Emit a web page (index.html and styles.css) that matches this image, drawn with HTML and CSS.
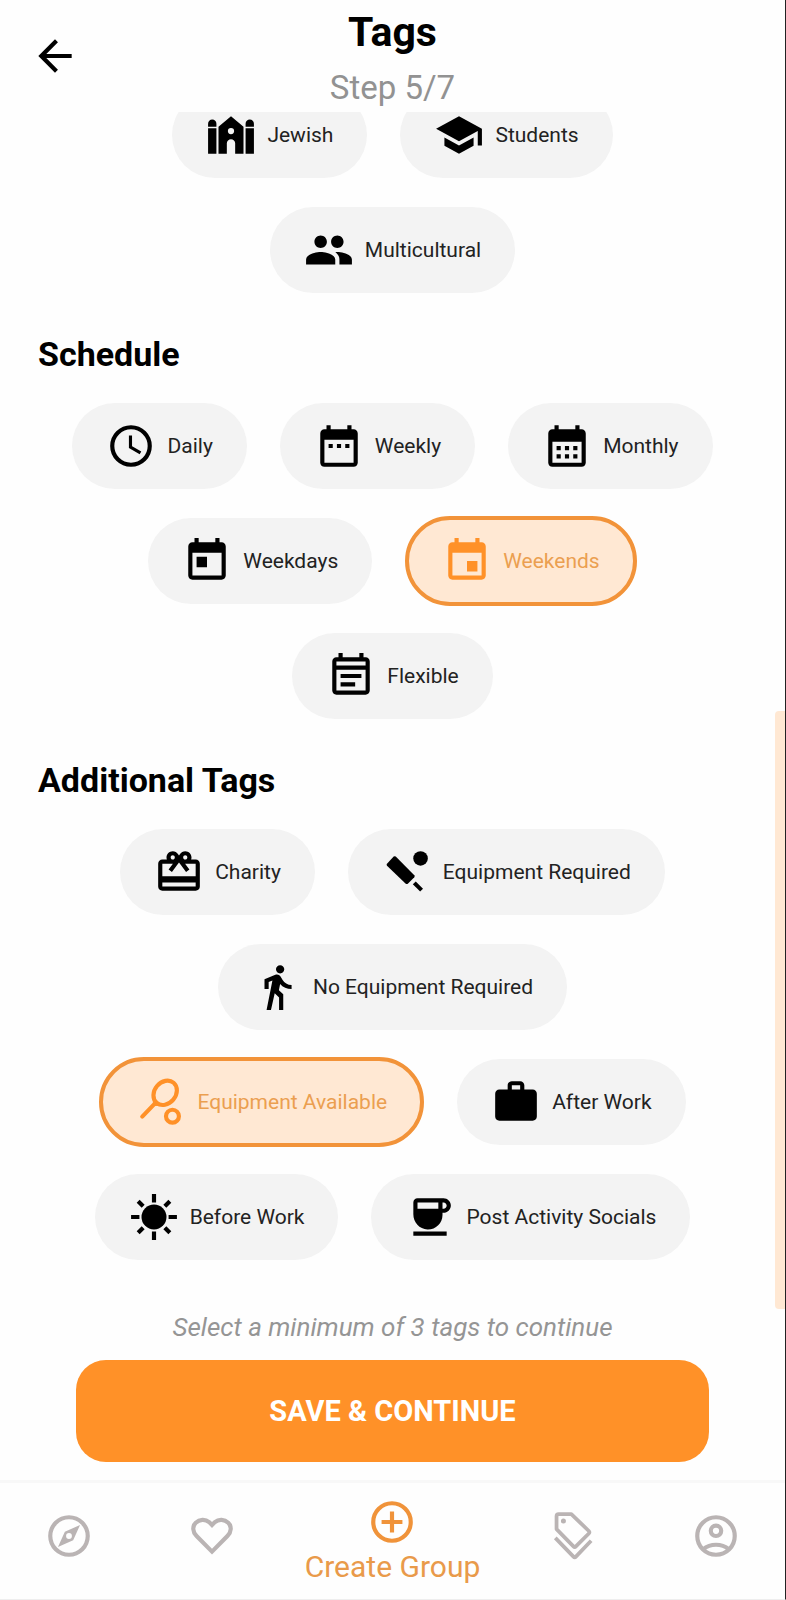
FILE: index.html
```html
<!DOCTYPE html>
<html lang="en">
<head>
<meta charset="utf-8">
<meta name="viewport" content="width=device-width, initial-scale=1">
<title>Tags</title>
<link rel="stylesheet" href="styles.css">
</head>
<body>
<div class="screen">
  <header class="header">
    <button class="back" type="button" aria-label="Back">
      <svg class="icon" viewBox="0 0 24 24"><path d="M20 11H7.830l5.590-5.590L12 4l-8 8 8 8 1.410-1.410L7.830 13H20v-2z"/></svg>
    </button>
    <div class="heading">
      <h1 class="title">Tags</h1>
      <p class="step">Step 5/7</p>
    </div>
  </header>

  <main class="content">
    <div class="chips chips-scrolled">
      <button class="chip" type="button">
        <svg class="icon" viewBox="0 0 24 24"><path d="M1 8V6.600a2 2 0 0 1 4 0V8zM1 8.700h4V21H1zM19 8V6.600a2 2 0 0 1 4 0V8zM19 8.700h4V21h-4z"/><path fill-rule="evenodd" d="M12 3l6 5v13h-4v-5a2 2 0 0 0-4 0v5H6V8zM12 8.600a1.500 1.500 0 1 0 0 3 1.500 1.500 0 0 0 0-3z"/></svg>
        Jewish
      </button>
      <button class="chip" type="button">
        <svg class="icon" viewBox="0 0 24 24"><path d="M5 13.180v4L12 21l7-3.820v-4L12 17l-7-3.820zM12 3L1 9l11 6 9-4.910V17h2V9L12 3z"/></svg>
        Students
      </button>
      <button class="chip" type="button">
        <svg class="icon" viewBox="0 0 24 24"><path d="M16 11c1.660 0 2.990-1.340 2.990-3S17.660 5 16 5c-1.660 0-3 1.340-3 3s1.340 3 3 3zm-8 0c1.660 0 2.990-1.340 2.990-3S9.660 5 8 5C6.340 5 5 6.340 5 8s1.340 3 3 3zm0 2c-2.330 0-7 1.170-7 3.500V19h14v-2.500c0-2.330-4.670-3.500-7-3.500zm8 0c-.29 0-.62.02-.97.05 1.160.84 1.970 1.970 1.970 3.450V19h6v-2.500c0-2.330-4.670-3.500-7-3.500z"/></svg>
        Multicultural
      </button>
    </div>

    <h2 class="section-title">Schedule</h2>
    <div class="chips">
      <button class="chip" type="button">
        <svg class="icon line" viewBox="0 0 24 24"><circle cx="12" cy="12" r="9"/><path stroke-width="1.500" d="M11.750 7v5.500l4.800 2.800"/></svg>
        Daily
      </button>
      <button class="chip" type="button">
        <svg class="icon" viewBox="0 0 24 24"><path d="M9 11H7v2h2v-2zm4 0h-2v2h2v-2zm4 0h-2v2h2v-2zm2-7h-1V2h-2v2H8V2H6v2H5c-1.110 0-1.990.9-1.990 2L3 20c0 1.100.89 2 2 2h14c1.100 0 2-.9 2-2V6c0-1.100-.9-2-2-2zm0 16H5V9h14v11z"/></svg>
        Weekly
      </button>
      <button class="chip" type="button">
        <svg class="icon" viewBox="0 0 24 24"><path d="M19 4h-1V2h-2v2H8V2H6v2H5c-1.110 0-1.990.9-1.990 2L3 20c0 1.100.89 2 2 2h14c1.100 0 2-.9 2-2V6c0-1.100-.9-2-2-2zm0 16H5V10h14v10zM9 14H7v-2h2v2zm4 0h-2v-2h2v2zm4 0h-2v-2h2v2zm-8 4H7v-2h2v2zm4 0h-2v-2h2v2zm4 0h-2v-2h2v2z"/></svg>
        Monthly
      </button>
      <button class="chip" type="button">
        <svg class="icon" viewBox="0 0 24 24"><path d="M19 3h-1V1h-2v2H8V1H6v2H5c-1.110 0-1.990.9-1.990 2L3 19c0 1.100.89 2 2 2h14c1.100 0 2-.9 2-2V5c0-1.100-.9-2-2-2zm0 16H5V8h14v11zM7 10h5v5H7z"/></svg>
        Weekdays
      </button>
      <button class="chip selected" type="button" aria-pressed="true">
        <svg class="icon" viewBox="0 0 24 24"><path d="M17 12h-5v5h5v-5zM16 1v2H8V1H6v2H5c-1.110 0-1.990.9-1.990 2L3 19c0 1.100.89 2 2 2h14c1.100 0 2-.9 2-2V5c0-1.100-.9-2-2-2h-1V1h-2zm3 18H5V8h14v11z"/></svg>
        Weekends
      </button>
      <button class="chip" type="button">
        <svg class="icon" viewBox="0 0 24 24"><path d="M19 3h-1V1h-2v2H8V1H6v2H5c-1.110 0-1.990.9-1.990 2L3 19c0 1.100.89 2 2 2h14c1.100 0 2-.9 2-2V5c0-1.100-.9-2-2-2zm0 16H5V9h14v10zm0-12H5V5h14v2zM7 11h10v2H7zm0 4h7v2H7z"/></svg>
        Flexible
      </button>
    </div>

    <h2 class="section-title">Additional Tags</h2>
    <div class="chips">
      <button class="chip" type="button">
        <svg class="icon" viewBox="0 0 24 24"><path d="M20 6h-2.180c.11-.31.18-.65.18-1 0-1.660-1.340-3-3-3-1.050 0-1.960.54-2.500 1.350l-.5.67-.5-.68C10.960 2.540 10.050 2 9 2 7.340 2 6 3.340 6 5c0 .35.07.69.18 1H4c-1.110 0-1.990.89-1.990 2L2 19c0 1.110.89 2 2 2h16c1.110 0 2-.89 2-2V8c0-1.110-.89-2-2-2zm-5-2c.55 0 1 .45 1 1s-.45 1-1 1-1-.45-1-1 .45-1 1-1zM9 4c.55 0 1 .45 1 1s-.45 1-1 1-1-.45-1-1 .45-1 1-1zm11 15H4v-2h16v2zm0-5H4V8h5.080L7 10.830 8.620 12 11 8.760l1-1.360 1 1.360L15.380 12 17 10.830 14.920 8H20v6z"/></svg>
        Charity
      </button>
      <button class="chip" type="button">
        <svg class="icon" viewBox="0 0 24 24"><circle cx="18.500" cy="5.500" r="3.500"/><path d="M2.400 8L5.600 4.600q.5-.4 1 0l8.900 8.900q.4.500 0 1l-3.100 3.100q-.5.400-1 0L2.400 9q-.4-.5 0-1z"/><path d="M14.800 17.900l1.400-1.400 3.500 3.500-1.400 1.400z"/></svg>
        Equipment Required
      </button>
      <button class="chip" type="button">
        <svg class="icon" viewBox="0 0 24 24"><path d="M13.500 5.500c1.100 0 2-.9 2-2s-.9-2-2-2-2 .9-2 2 .9 2 2 2zM9.800 8.900L7 23h2.100l1.800-8 2.100 2v6h2v-7.500l-2.100-2 .6-3C14.800 12 16.800 13 19 13v-2c-1.900 0-3.500-1-4.300-2.400l-1-1.600c-.4-.6-1-1-1.700-1-.3 0-.5.1-.8.1L6 8.300V13h2V9.600l1.800-.7"/></svg>
        No Equipment Required
      </button>
      <button class="chip selected" type="button" aria-pressed="true">
        <svg class="icon line" viewBox="0 0 24 24"><ellipse cx="14" cy="7.600" rx="6.300" ry="5.100" transform="rotate(-50 14 7.600)"/><path stroke-linecap="round" d="M3 19l6-6.200"/><path class="solid" d="M7.700 8.500l.5 4.500.8.900 4.800-.1-4.200-1z"/><circle cx="17.500" cy="18.800" r="3.100"/></svg>
        Equipment Available
      </button>
      <button class="chip" type="button">
        <svg class="icon" viewBox="0 0 24 24"><path d="M20 6h-4V4c0-1.110-.89-2-2-2h-4c-1.110 0-2 .89-2 2v2H4c-1.110 0-1.990.89-1.990 2L2 19c0 1.110.89 2 2 2h16c1.110 0 2-.89 2-2V8c0-1.110-.89-2-2-2zm-6 0h-4V4h4v2z"/></svg>
        After Work
      </button>
      <button class="chip" type="button">
        <svg class="icon line" viewBox="0 0 24 24"><circle class="solid" cx="12" cy="12" r="6"/><path d="M12 1v4M12 19v4M1 12h4M19 12h4M4.400 4.400l2.400 2.400M17.200 17.200l2.400 2.400M4.400 19.600l2.400-2.400M17.200 6.800l2.400-2.400"/></svg>
        Before Work
      </button>
      <button class="chip" type="button">
        <svg class="icon" viewBox="0 0 24 24"><path d="M18.500 3H6C4.900 3 4 3.900 4 5v5.710c0 3.830 2.950 7.180 6.780 7.290 3.960.12 7.220-3.060 7.220-7v-1h.5c1.930 0 3.500-1.570 3.500-3.500S20.430 3 18.500 3zM16 5v3H6V5h10zm2.500 3H18V5h.5c.83 0 1.500.67 1.500 1.500S19.330 8 18.500 8zM4 19h16v2H4z"/></svg>
        Post Activity Socials
      </button>
    </div>
    <div class="scrollbar"></div>
  </main>

  <div class="actions">
    <p class="hint">Select a minimum of 3 tags to continue</p>
    <button class="save" type="button">SAVE &amp; CONTINUE</button>
  </div>

  <nav class="tabs">
    <a class="tab" href="#explore" aria-label="Explore">
      <svg class="icon" viewBox="0 0 24 24"><path fill-rule="evenodd" d="M12 2a10 10 0 1 0 0 20 10 10 0 0 0 0-20zm0 18a8 8 0 1 1 0-16 8 8 0 0 1 0 16zm-5.300-2.700l7.300-3.300 3.300-7.300L10 10zM12 10.600a1.400 1.400 0 1 1 0 2.800 1.400 1.400 0 0 1 0-2.800z"/></svg>
    </a>
    <a class="tab" href="#favourites" aria-label="Favourites">
      <svg class="icon line" viewBox="0 0 24 24"><path d="M12 19.500L4.600 12C2.600 9.900 2.500 7.300 4.200 5.600 6 3.900 8.800 3.800 10.600 5.300L12 6.700l1.400-1.400c1.800-1.500 4.600-1.400 6.400.3 1.700 1.700 1.600 4.300-.4 6.400z"/></svg>
    </a>
    <a class="tab active" href="#create">
      <svg class="icon line" viewBox="0 0 24 24"><circle cx="12" cy="12" r="9"/><path d="M12 7v10M7 12h10"/></svg>
      Create Group
    </a>
    <a class="tab" href="#tags" aria-label="Tags">
      <svg class="icon line" viewBox="0 0 24 24"><path stroke-width="1.800" stroke-linejoin="round" d="M4.100 2.500q0-1 1-1h6.100l8.400 8.100q.6.600 0 1.200l-6.200 6.200q-.6.600-1.200 0L4.100 8.700z"/><path stroke-width="1.800" stroke-linejoin="round" d="M3.500 12.900l8.700 9q.6.600 1.200 0l7.300-7.600"/><circle class="solid" cx="7.400" cy="4.800" r="1.200"/></svg>
    </a>
    <a class="tab" href="#profile" aria-label="Profile">
      <svg class="icon line" viewBox="0 0 24 24"><circle cx="12" cy="12" r="9"/><circle cx="12" cy="9.500" r="2.500"/><path d="M5.800 18.400c1.700-1.400 3.900-2.200 6.200-2.200s4.500.8 6.200 2.200"/></svg>
    </a>
  </nav>
</div>
</body>
</html>
```

FILE: styles.css
```css
*,
*::before,
*::after {
  box-sizing: border-box;
}

body {
  margin: 0;
  background: #fefefe;
  color: #000;
  font-family: Roboto, "Liberation Sans", sans-serif;
}

h1,
h2,
p {
  margin: 0;
}

button {
  border: 0;
  background: none;
  color: inherit;
  font: inherit;
  cursor: pointer;
}

.screen {
  display: flex;
  flex-direction: column;
  min-height: 100vh;
  border-right: 1px solid #222;
  border-bottom: 1px solid #eee;
}

.icon {
  display: block;
  flex: none;
  width: 50px;
  height: 50px;
  fill: currentColor;
}

.line {
  fill: none;
  stroke: currentColor;
  stroke-width: 2;
}

.solid {
  fill: currentColor;
  stroke: none;
}

.header {
  display: grid;
  grid-template-columns: 1fr auto 1fr;
  align-items: center;
  padding-left: 30px;
  padding-right: 30px;
  background: #fefefe;
  z-index: 1;
}

.back {
  justify-self: start;
  padding: 0;
}

.heading {
  padding-top: 8px;
  text-align: center;
}

.title {
  font-size: 41px;
  line-height: 48px;
  font-weight: 700;
}

.step {
  margin-top: 8px;
  color: #929292;
  font-size: 33px;
  line-height: 48px;
}

.content {
  position: relative;
  flex: 1;
  overflow: hidden;
}

.chips {
  display: flex;
  flex-wrap: wrap;
  justify-content: center;
  gap: 29px 33px;
  padding: 0 56px;
}

.chips-scrolled {
  width: 80%;
  margin: -20px auto 0;
}

.chip {
  display: flex;
  align-items: center;
  gap: 11px;
  padding: 18px 34px;
  border-radius: 45px;
  background: #f3f3f3;
  color: #222;
  font-size: 21px;
  line-height: 28px;
  white-space: nowrap;
}

.chip .icon {
  color: #000;
}

.selected {
  margin: -2px 0;
  padding: 16px 33px;
  border: 4px solid #f29339;
  background: #ffe8d3;
  color: #eb9f50;
}

.selected .icon {
  color: #ff9128;
}

.section-title {
  padding: 41px 38px 29px;
  font-size: 34px;
  line-height: 40px;
  font-weight: 700;
}

.scrollbar {
  position: absolute;
  right: 0;
  bottom: 0;
  width: 10px;
  height: 50%;
  border-radius: 4px 0 0 4px;
  background: #ffe8d3;
}

.actions {
  padding: 0 76px 18px;
  text-align: center;
}

.hint {
  padding-bottom: 15px;
  color: #959595;
  font-size: 26px;
  line-height: 36px;
  font-style: italic;
}

.save {
  width: 100%;
  padding: 33px 16px;
  border-radius: 30px;
  background: #ff9128;
  color: #fff;
  font-size: 29px;
  line-height: 36px;
  font-weight: 700;
}

.tabs {
  display: grid;
  grid-template-columns: 11fr 12fr 17fr 12fr 11fr;
  align-items: center;
  padding: 14px 0;
  border-top: 3px solid #f8f8f8;
}

.tab {
  display: flex;
  flex-direction: column;
  align-items: center;
  gap: 2px;
  padding-bottom: 10px;
  color: #bab4b4;
  font-size: 30px;
  line-height: 36px;
  text-decoration: none;
  white-space: nowrap;
}

.active {
  padding-bottom: 0;
  color: #e99a4a;
}

.active .icon {
  color: #f0933a;
}
```
